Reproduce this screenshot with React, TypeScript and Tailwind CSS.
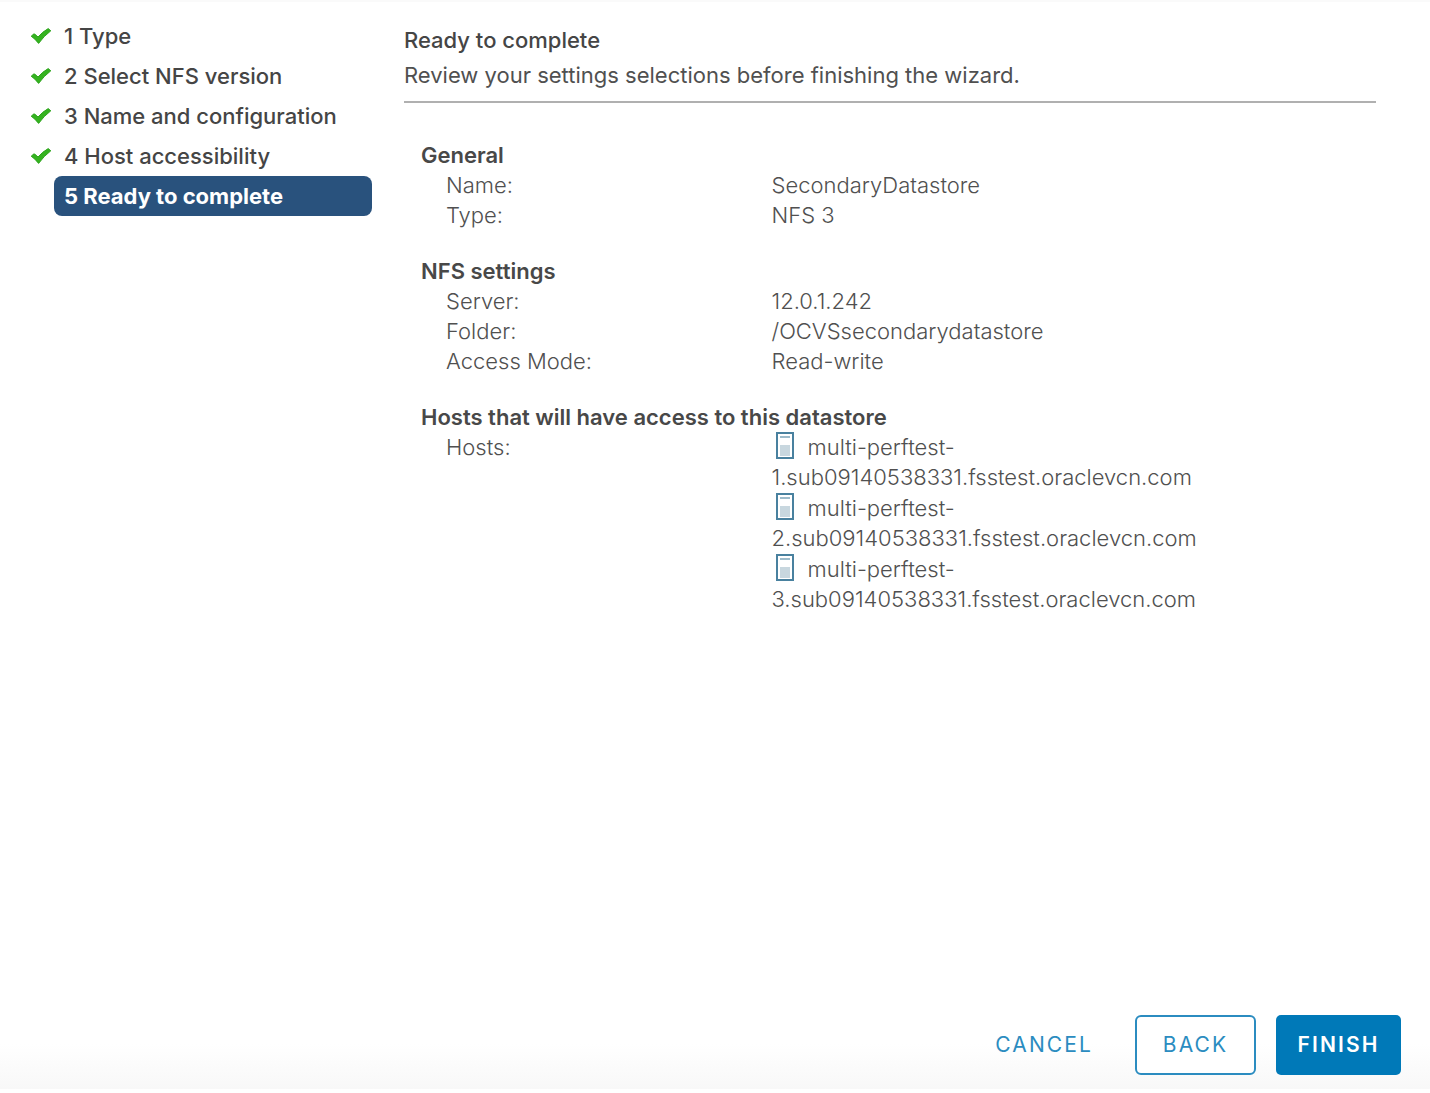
import { clsx } from "clsx";
import type { ReactNode } from "react";

const steps = [
  { label: "1 Type", done: true },
  { label: "2 Select NFS version", done: true },
  { label: "3 Name and configuration", done: true },
  { label: "4 Host accessibility", done: true },
  { label: "5 Ready to complete", done: false },
];

const hosts = [
  "multi-perftest-1.sub09140538331.fsstest.oraclevcn.com",
  "multi-perftest-2.sub09140538331.fsstest.oraclevcn.com",
  "multi-perftest-3.sub09140538331.fsstest.oraclevcn.com",
];

function CheckIcon() {
  return (
    <svg width="22" height="18" viewBox="0 0 22 18" aria-hidden="true">
      <path
        d="M1.2 9.2 4 6.8Q6.4 8 8 10 12.4 4.8 18.2 1.6L20.8 3.8Q13.8 9 8.6 16.4 5.4 12 1.2 9.2Z"
        fill="#35b31f"
        stroke="#2ca41c"
        strokeWidth="1"
        strokeLinejoin="round"
      />
    </svg>
  );
}

function HostIcon() {
  return (
    <svg
      className="ml-1 mr-3.5 inline-block align-[-4px]"
      width="18"
      height="27"
      viewBox="0 0 18 27"
      aria-hidden="true"
    >
      <rect x="1" y="1" width="16" height="25" fill="#fff" stroke="#49819f" strokeWidth="2" />
      <rect x="4" y="4" width="10" height="2" fill="#9dbbca" />
      <rect x="4" y="13" width="10" height="11" fill="#c8d7df" />
    </svg>
  );
}

/** Left rail listing the wizard pages. */
function WizardSteps() {
  return (
    <nav className="w-[372px] shrink-0 pt-3.5" aria-label="Wizard steps">
      <ol>
        {steps.map((step) => (
          <li key={step.label} className="flex h-10 items-center">
            <span className="flex w-[54px] shrink-0 justify-end pr-0.5">
              {step.done && <CheckIcon />}
            </span>
            <a
              href="#step"
              aria-current={step.done ? undefined : "step"}
              className={clsx(
                "flex h-10 flex-1 items-center whitespace-nowrap rounded-lg pl-2.5",
                step.done ? "font-medium text-[#454545]" : "bg-[#29527d] font-bold text-white",
              )}
            >
              {step.label}
            </a>
          </li>
        ))}
      </ol>
    </nav>
  );
}

function Section({ title, children }: { title: string; children: ReactNode }) {
  return (
    <section>
      <h2 className="font-semibold text-[#484848]">{title}</h2>
      <dl className="grid grid-cols-[35%_1fr] pl-[25px] font-light">{children}</dl>
    </section>
  );
}

function Row({ label, children }: { label: string; children: ReactNode }) {
  return (
    <>
      <dt>{label}</dt>
      <dd>{children}</dd>
    </>
  );
}

export default function App() {
  return (
    <div className="flex min-h-screen flex-col border-t-2 border-[#fafafa] bg-white font-['Inter',sans-serif] text-[22px] leading-[30px] text-[#505050]">
      <div className="flex flex-1">
        <WizardSteps />
        <main className="min-w-0 flex-1 pl-8 pr-[54px] pt-[23px]">
          <header className="border-b-2 border-[#b0b0b0] pb-[11px]">
            <h1 className="font-medium text-[#454545]">Ready to complete</h1>
            <p className="mt-[5px]">
              Review your settings selections before finishing the wizard.
            </p>
          </header>
          <div className="mt-[37px] space-y-[26px] pl-[17px]">
            <Section title="General">
              <Row label="Name:">SecondaryDatastore</Row>
              <Row label="Type:">NFS 3</Row>
            </Section>
            <Section title="NFS settings">
              <Row label="Server:">12.0.1.242</Row>
              <Row label="Folder:">/OCVSsecondarydatastore</Row>
              <Row label="Access Mode:">Read-write</Row>
            </Section>
            <Section title="Hosts that will have access to this datastore">
              <Row label="Hosts:">
                <ul className="space-y-px pr-16">
                  {hosts.map((host) => (
                    <li key={host}>
                      <HostIcon />
                      {host}
                    </li>
                  ))}
                </ul>
              </Row>
            </Section>
          </div>
        </main>
      </div>
      <footer className="mb-1 flex items-center justify-end gap-5 bg-linear-to-b from-white from-50% to-[#f8f8f8] pb-3.5 pr-[29px] pt-4 text-[21px] tracking-widest">
        <button type="button" className="h-[60px] px-[22px] text-[#2b8cc0]">
          CANCEL
        </button>
        <button
          type="button"
          className="h-[60px] w-[121px] rounded-md border-2 border-[#2b8cc0] bg-white text-[#2b8cc0]"
        >
          BACK
        </button>
        <button
          type="button"
          className="h-[60px] w-[125px] rounded-[5px] bg-[#0079b8] font-semibold text-white"
        >
          FINISH
        </button>
      </footer>
    </div>
  );
}
